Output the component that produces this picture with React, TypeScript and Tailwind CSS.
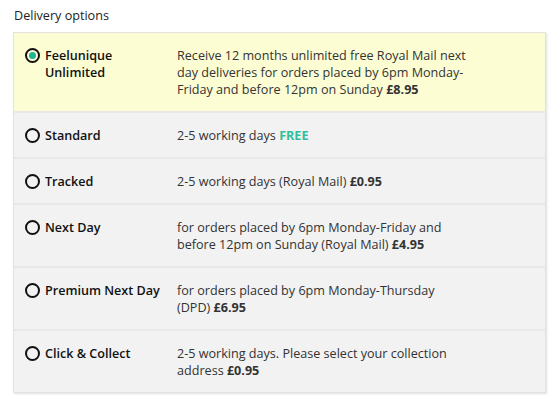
import React from "react";

type Opt = {
  label: string;
  desc: React.ReactNode;
  selected?: boolean;
};

const options: Opt[] = [
  {
    label: "Feelunique Unlimited",
    selected: true,
    desc: (
      <>
        Receive 12 months unlimited free Royal Mail next day deliveries for orders placed by 6pm Monday-Friday and before 12pm on Sunday <b className="font-bold">£8.95</b>
      </>
    ),
  },
  {
    label: "Standard",
    desc: (
      <>
        2-5 working days <span className="font-bold text-[#2fbf9b]">FREE</span>
      </>
    ),
  },
  {
    label: "Tracked",
    desc: (
      <>
        2-5 working days (Royal Mail) <b className="font-bold">£0.95</b>
      </>
    ),
  },
  {
    label: "Next Day",
    desc: (
      <>
        for orders placed by 6pm Monday-Friday and before 12pm on Sunday (Royal Mail) <b className="font-bold">£4.95</b>
      </>
    ),
  },
  {
    label: "Premium Next Day",
    desc: (
      <>
        for orders placed by 6pm Monday-Thursday (DPD) <b className="font-bold">£6.95</b>
      </>
    ),
  },
  {
    label: "Click & Collect",
    desc: (
      <>
        2-5 working days. Please select your collection address <b className="font-bold">£0.95</b>
      </>
    ),
  },
];

function Radio({ on }: { on?: boolean }) {
  return (
    <div className="mt-[1px] flex h-[15px] w-[15px] shrink-0 items-center justify-center rounded-full border-2 border-[#111]">
      {on && <div className="h-[7px] w-[7px] rounded-full bg-[#1fb596]" />}
    </div>
  );
}

export default function App() {
  return (
    <div
      className="min-h-[408px] w-[560px] bg-white px-[13px] pt-[7px] text-[12.6px] leading-[17px] text-[#333]"
      style={{ fontFamily: '"Open Sans", "Liberation Sans", sans-serif' }}
    >
      <div className="mb-[7px] pl-[1px] text-[12.6px] leading-[18px] text-[#222]">Delivery options</div>
      <div className="w-[533px] border border-[#e2e2e2] shadow-[1px_1px_2px_rgba(0,0,0,0.12)]">
        {options.map((o, i) => (
          <div
            key={o.label}
            className={`flex items-start pt-[14px] pb-[13px] pl-[11px] ${i > 0 ? "border-t-2 border-[#e8e8e8]" : ""} ${o.selected ? "bg-[#fdfdd4]" : "bg-[#f2f2f2]"}`}
          >
            <Radio on={o.selected} />
            <div className="ml-[5px] w-[128px] shrink-0 font-semibold text-[#111]">{o.label}</div>
            <div className="ml-[4px] w-[290px]">{o.desc}</div>
          </div>
        ))}
      </div>
    </div>
  );
}
